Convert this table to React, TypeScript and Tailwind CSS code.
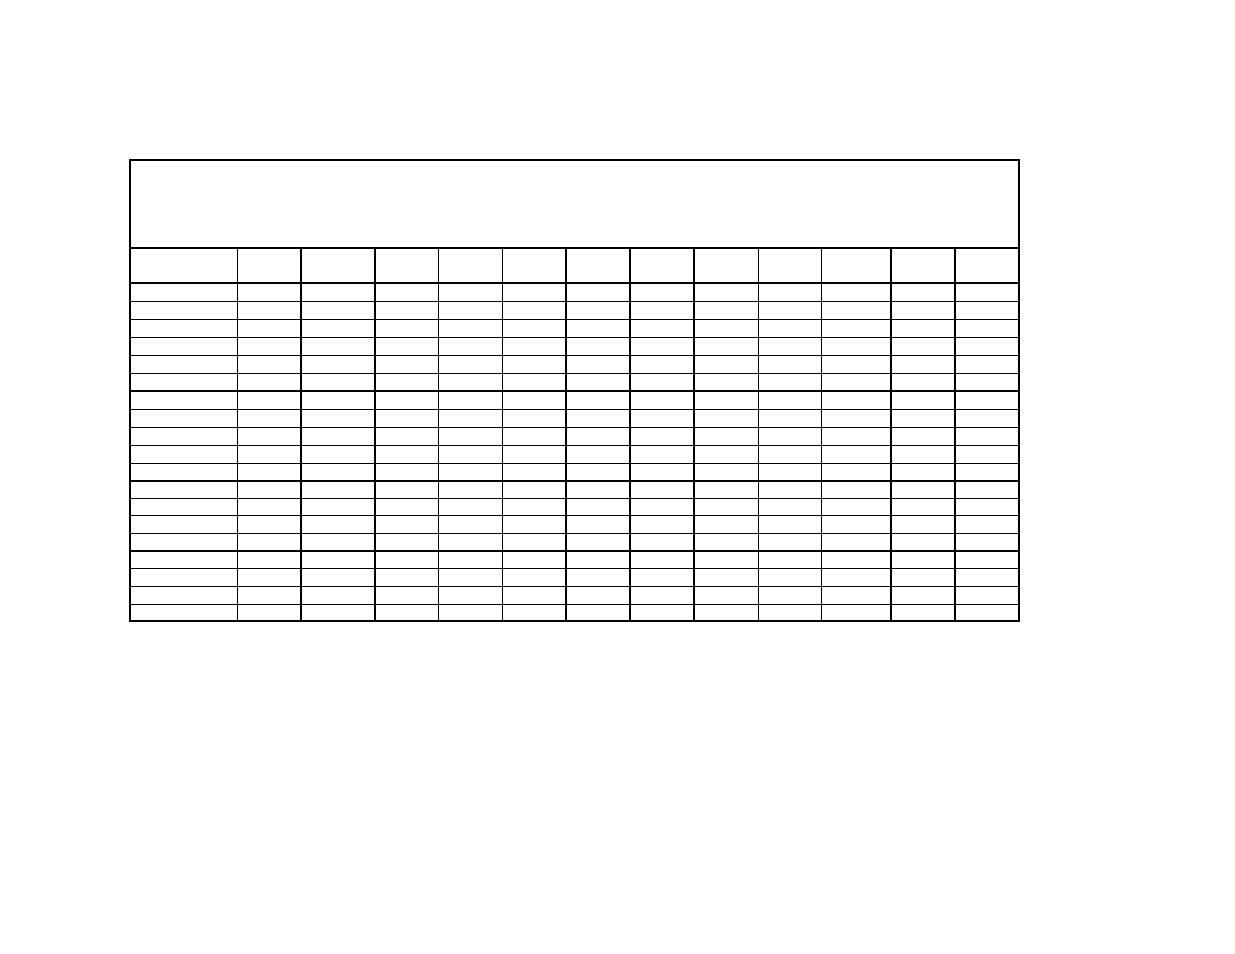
const cols = '106px 63px 74px 64px 64px 63px 64px 64px 65px 63px 69px 64px 64px';

// left border width for each column after the first (1 = thin, 2 = thick)
const divider = [0, 1, 2, 2, 1, 1, 2, 2, 2, 1, 1, 2, 2];

// body rows: height incl. bottom border, and bottom border weight (0 = none)
const rows: { h: string; b: number }[] = [
  { h: 'h-[18px]', b: 1 },
  { h: 'h-[18px]', b: 1 },
  { h: 'h-[18px]', b: 1 },
  { h: 'h-[18px]', b: 1 },
  { h: 'h-[18px]', b: 1 },
  { h: 'h-[18px]', b: 2 },
  { h: 'h-[18px]', b: 1 },
  { h: 'h-[18px]', b: 1 },
  { h: 'h-[18px]', b: 1 },
  { h: 'h-[18px]', b: 1 },
  { h: 'h-[18px]', b: 2 },
  { h: 'h-[17px]', b: 1 },
  { h: 'h-[17px]', b: 1 },
  { h: 'h-[18px]', b: 1 },
  { h: 'h-[18px]', b: 2 },
  { h: 'h-[17px]', b: 1 },
  { h: 'h-[18px]', b: 1 },
  { h: 'h-[18px]', b: 1 },
  { h: 'h-[15px]', b: 0 },
];

function Cells() {
  return (
    <>
      {divider.map((d, i) => (
        <div
          key={i}
          className={
            d === 0 ? '' : d === 1 ? 'border-l border-black' : 'border-l-2 border-black'
          }
        />
      ))}
    </>
  );
}

function Row({ h, b }: { h: string; b: number }) {
  const bottom =
    b === 0 ? '' : b === 1 ? 'border-b border-black' : 'border-b-2 border-black';
  return (
    <div className={`grid ${h} ${bottom}`} style={{ gridTemplateColumns: cols }}>
      <Cells />
    </div>
  );
}

export default function App() {
  return (
    <div className="min-h-[954px] w-full bg-white pt-[159px] pl-[129px]">
      <div className="flex w-[891px] flex-col border-2 border-black">
        {/* title block */}
        <div className="h-[88px] border-b-2 border-black" />
        {/* header row */}
        <div className="grid h-[35px] border-b-2 border-black" style={{ gridTemplateColumns: cols }}>
          <Cells />
        </div>
        {rows.map((r, i) => (
          <Row key={i} h={r.h} b={r.b} />
        ))}
      </div>
    </div>
  );
}
